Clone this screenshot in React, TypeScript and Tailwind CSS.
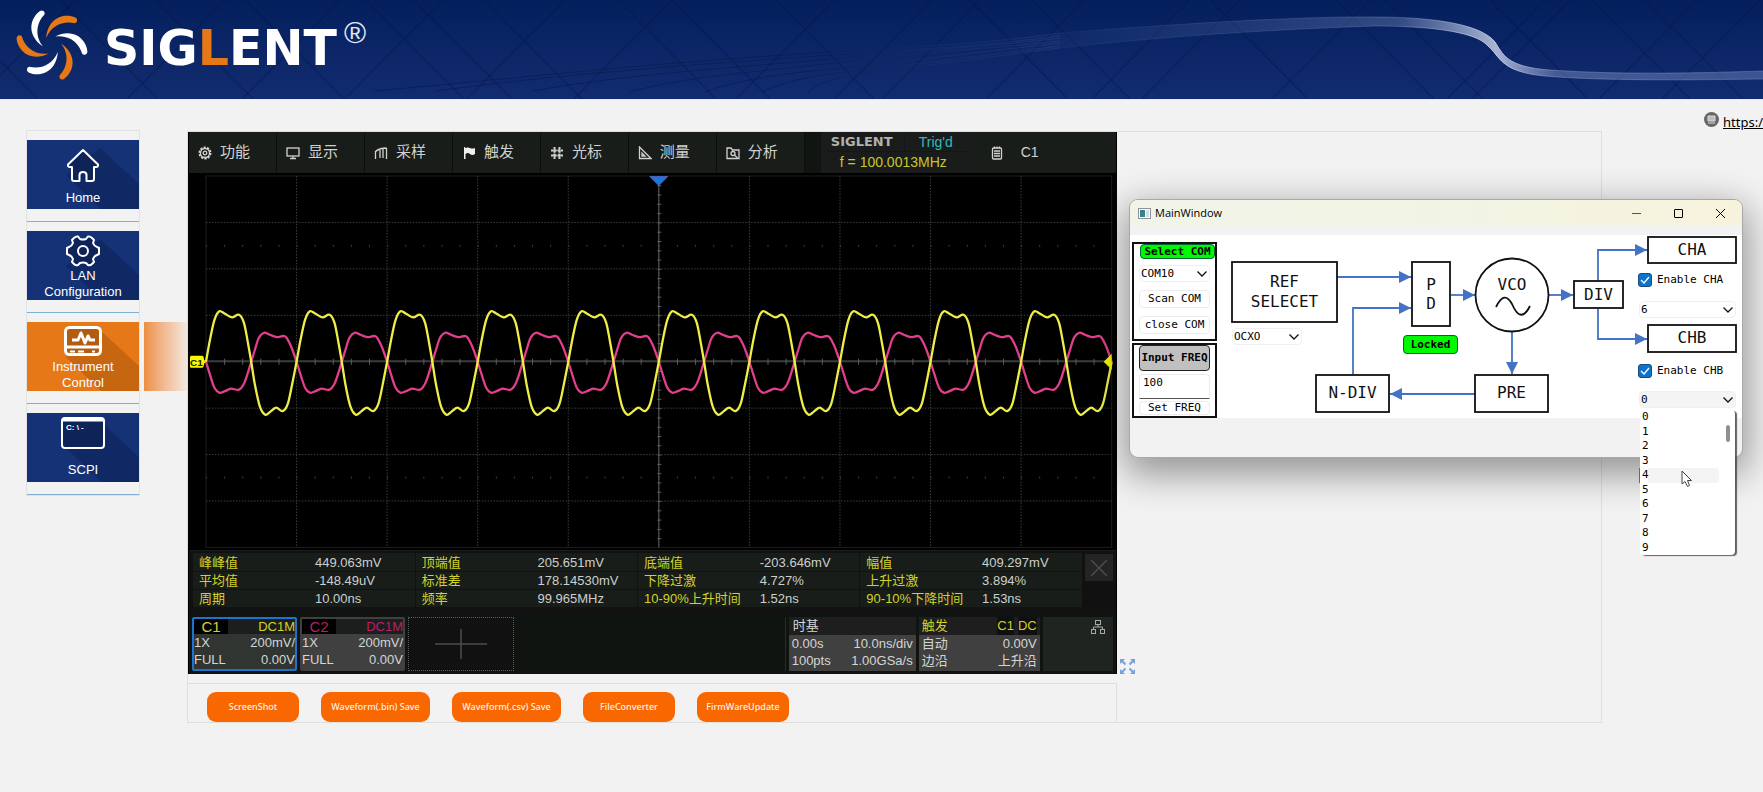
import { useState } from "react";
import type { ReactNode } from "react";

type Point = [number, number];

const SCOPE_FONT = "font-['Liberation_Sans','Noto_Sans_CJK_SC',sans-serif]";
const MONO_FONT = "font-['DejaVu_Sans_Mono','Liberation_Mono',monospace]";

// ---------- WAVEFORMS ----------
const DIV = 90.7;

const ch1Period: Point[] = [
  [0, 0], [4, -22], [8.5, -42], [13.3, -50.5], [19, -48], [26, -44.5], [33, -47], [38, -39], [42, -19],
  [45.3, 0], [49, 23], [54, 45], [59.3, 53], [64, 50.5], [70.3, 46], [76.7, 49.5], [82, 42], [87, 19],
];

const ch2Period: Point[] = [
  [0, 0], [4, 13], [8.5, 26], [13.3, 31], [19, 29.5], [25, 27], [33, 28], [38, 22], [42, 11],
  [45.3, 0], [49, -12], [53, -24], [58.3, -29], [64, -27], [71, -24.7], [79, -25.5], [84, -18], [88, -8],
];

function buildWave(period: Point[]) {
  const pts: Point[] = [];
  for (let i = 0; i < 10; i++) {
    period.forEach(([x, y]) => pts.push([17 + i * DIV + x, 189 + y]));
  }
  pts.push([17 + 10 * DIV, 189]);

  let d = `M${pts[0][0]} ${pts[0][1]}`;
  for (let i = 0; i < pts.length - 1; i++) {
    const p0 = pts[i - 1] || pts[i];
    const p1 = pts[i];
    const p2 = pts[i + 1];
    const p3 = pts[i + 2] || p2;
    const c1 = [p1[0] + (p2[0] - p0[0]) / 6, p1[1] + (p2[1] - p0[1]) / 6];
    const c2 = [p2[0] - (p3[0] - p1[0]) / 6, p2[1] - (p3[1] - p1[1]) / 6];
    d += `C${c1[0].toFixed(1)} ${c1[1].toFixed(1)} ${c2[0].toFixed(1)} ${c2[1].toFixed(1)} ${p2[0].toFixed(1)} ${p2[1].toFixed(1)}`;
  }
  return d;
}

const range = (n: number) => Array.from({ length: n }, (_, i) => i);

// ---------- HEADER ----------
function Header() {
  const petals = [0, 60, 120, 180, 240, 300];
  const streaks = [
    "M374 91C520 78 640 64 800 54S1000 42 1060 33",
    "M436 91C560 74 700 64 820 56S1000 44 1060 36",
    "M532 91C640 72 740 68 840 58S1000 46 1060 38",
    "M630 92C690 75 780 70 860 60S1000 48 1060 41",
    "M705 92C750 74 830 70 880 64S1000 50 1060 43",
    "M762 92C800 74 850 72 900 66S1010 52 1060 46",
    "M808 92C825 76 870 72 920 66S1010 54 1060 48",
  ];

  return (
    <header className="relative h-[100px] overflow-hidden border-b border-[#e8e8f8] bg-linear-to-b from-[#051f5d] to-[#122c70]">
      <svg className="absolute inset-0 h-full w-full" aria-hidden="true">
        <defs>
          <linearGradient id="ribbon" gradientUnits="userSpaceOnUse" x1="1000" x2="1763" y1="0" y2="0">
            <stop offset="0" stopColor="#8fa0d0" stopOpacity="0" />
            <stop offset="0.3" stopColor="#8fa0d0" stopOpacity="0.16" />
            <stop offset="0.52" stopColor="#9fb0dc" stopOpacity="0.28" />
            <stop offset="0.65" stopColor="#dfe6fa" stopOpacity="0.75" />
            <stop offset="0.73" stopColor="#a5b5e0" stopOpacity="0.35" />
            <stop offset="1" stopColor="#8fa3d8" stopOpacity="0.35" />
          </linearGradient>
          <linearGradient id="streak" gradientUnits="userSpaceOnUse" x1="370" x2="1060" y1="0" y2="0">
            <stop offset="0" stopColor="#061a4c" stopOpacity="0.7" />
            <stop offset="0.65" stopColor="#061a4c" stopOpacity="0.6" />
            <stop offset="1" stopColor="#3a4f8a" stopOpacity="0.3" />
          </linearGradient>
        </defs>
        <g stroke="#03184a" strokeOpacity="0.38" strokeWidth="1.5">
          {[-60, 60, 155, 246, 366, 414, 484, 618, 672, 776, 970, 1032, 1210, 1336, 1385, 1490, 1592, 1645].map((x) => (
            <path key={x} d={`M${x} 0l98 99`} />
          ))}
          {[75, 225, 340, 443, 565, 672, 834, 932, 980, 1084, 1190, 1240, 1370, 1545, 1570, 1697, 1760].map((x) => (
            <path key={x} d={`M${x} 0l-98 99`} />
          ))}
        </g>
        <g fill="none" stroke="url(#streak)">
          {streaks.map((d) => (
            <path key={d} d={d} />
          ))}
        </g>
        <path
          d="M1000 41L1060 33C1160 25 1300 16 1374 17C1428 17 1480 23 1495 42C1503 54 1506 67 1550 70C1620 75 1700 73 1763 71V79C1690 80 1600 81 1545 76C1500 72 1500 56 1488 46C1475 30 1420 26 1374 26C1260 30 1160 37 1060 48L1000 56Z"
          fill="url(#ribbon)"
        />
        <path
          d="M1060 33C1160 25 1300 16 1374 17C1428 17 1480 23 1495 42C1503 54 1506 67 1550 70C1620 75 1700 73 1763 71M1060 48C1160 37 1260 30 1374 26C1420 26 1475 30 1488 46C1500 56 1500 72 1545 76C1600 81 1690 80 1763 79"
          fill="none"
          stroke="url(#ribbon)"
        />
      </svg>

      <div className="relative flex h-full items-start pl-4">
        <svg viewBox="0 0 72 72" className="mt-[9px] h-[72px] w-[72px] overflow-visible" role="img" aria-label="Siglent">
          {petals.map((deg, i) => (
            <path
              key={deg}
              transform={`rotate(${deg} 36 36)`}
              d="M24 2C14 9 10 26 27 37.500C18 26 21 13 28.500 5.500A3 3 0 0 0 24 2Z"
              fill={i % 2 === 0 ? "#ffffff" : "#e67817"}
            />
          ))}
        </svg>
        <span className="mt-[20px] ml-4 font-['DejaVu_Sans',sans-serif] text-[49px] leading-[58px] font-bold text-white">
          SIG<span className="text-[#e67817]">L</span>ENT
        </span>
        <span className="mt-[16px] ml-[7px] font-['Liberation_Sans',sans-serif] text-[30px] leading-[34px] text-[#e4e8f6]">®</span>
      </div>
    </header>
  );
}

// ---------- SIDEBAR ----------
function HomeIcon() {
  return (
    <svg viewBox="0 0 34 34" className="h-[34px] w-[34px]" fill="none" stroke="white" strokeWidth="2" strokeLinejoin="round">
      <path d="M17 2L32 16.500Q32.500 19 30 19H28V31Q28 33 26 33H20.500V27Q20.500 24 17 24T13.500 27V33H8Q6 33 6 31V19H4Q1.500 19 2 16.500Z" fill="#0e2458" />
    </svg>
  );
}

function GearIcon() {
  return (
    <svg viewBox="0 0 34 32" className="h-[32px] w-[34px]" fill="none" stroke="white" strokeWidth="2" strokeLinejoin="round">
      <path
        d="M8 3Q10 1 12 1.500L14 4Q17 5 20 4L22 1.500Q24 1 26 3L28 5L27 8Q28 11 31 12L33 13V19L31 20Q28 21 27 24L28 27L26 29Q24 31 22 30L20 28Q17 27 14 28L12 30Q10 31 8 29L6 27L7 24Q6 21 3 20L1 19V13L3 12Q6 11 7 8L6 5Z"
        fill="#0e2458"
      />
      <circle cx="17" cy="16" r="5" />
    </svg>
  );
}

function ScopeIcon() {
  return (
    <svg viewBox="0 0 38 30" className="h-[30px] w-[38px]" fill="none" stroke="white" strokeWidth="2">
      <rect x="1.500" y="1.500" width="35" height="27" rx="4" strokeWidth="3" fill="#b35c10" />
      <path d="M2 21h34" strokeWidth="3" />
      <path d="M8 14h6l3-7l4 10l3-7l2 4h5" strokeWidth="3" strokeLinejoin="round" />
      <path d="M6 25.500h5M14 25.500h6" />
      <path d="M28 25.500h3" />
    </svg>
  );
}

function ConsoleIcon() {
  return (
    <svg viewBox="0 0 44 32" className="h-[32px] w-[44px]" fill="none" stroke="white" strokeWidth="2">
      <rect x="1" y="1" width="42" height="30" rx="3" fill="#0e2458" />
      <path d="M2 3h40" strokeWidth="3" />
      <text x="5" y="13" fill="white" stroke="none" className="font-['Liberation_Sans',sans-serif] text-[8px] font-bold">
        C: \ -
      </text>
    </svg>
  );
}

const navItems = [
  { lines: ["Home"], icon: <HomeIcon />, active: false, pad: "pt-2 pb-[3px]" },
  { lines: ["LAN", "Configuration"], icon: <GearIcon />, active: false, pad: "pt-1" },
  { lines: ["Instrument", "Control"], icon: <ScopeIcon />, active: true, pad: "pt-1" },
  { lines: ["SCPI"], icon: <ConsoleIcon />, active: false, pad: "pt-1 pb-1" },
];

function Sidebar() {
  return (
    <nav className="w-[114px] shrink-0 self-start border border-[#e2e2e2] font-['Liberation_Sans',sans-serif] text-[13px] leading-4 text-white">
      {navItems.map((item) => (
        <div key={item.lines[0]} className="relative border-b border-[#7fb0d0] pt-[9px] pb-3">
          <a
            href="#"
            className={`relative flex h-[69px] flex-col items-center justify-between overflow-hidden text-center ${item.pad} ${
              item.active ? "bg-[#e67817]" : "bg-[#153277]"
            }`}
          >
            <svg className="absolute inset-0 h-full w-full" aria-hidden="true">
              <path
                d="M39 35L73 8L112 44V69H74Z"
                fill={item.active ? "#a8540c" : "#0c2052"}
                fillOpacity="0.5"
              />
            </svg>
            <span className="relative">{item.icon}</span>
            <span className="relative">
              {item.lines.map((line) => (
                <span key={line} className="block">
                  {line}
                </span>
              ))}
            </span>
          </a>
          {item.active && (
            <div className="absolute top-[9px] left-[117px] h-[69px] w-[43px] bg-linear-to-r from-[#ec8f42] to-[#f2e8e0]" />
          )}
        </div>
      ))}
    </nav>
  );
}

// ---------- OSCILLOSCOPE ----------
const stroke = { fill: "none", stroke: "#d0d2d0", strokeWidth: 1.3 };

const menuItems: { label: string; icon: ReactNode }[] = [
  {
    label: "功能",
    icon: (
      <g {...stroke}>
        <circle cx="7" cy="7" r="5.500" strokeDasharray="2.200 1.200" strokeWidth="2" />
        <circle cx="7" cy="7" r="4.500" />
        <circle cx="7" cy="7" r="1.800" />
      </g>
    ),
  },
  {
    label: "显示",
    icon: (
      <g {...stroke}>
        <rect x="1" y="2" width="12" height="8" />
        <path d="M7 10v2M4 12.500h6" />
      </g>
    ),
  },
  {
    label: "采样",
    icon: (
      <g {...stroke}>
        <path d="M1 6Q5 2 12.500 2M1.500 6v7M6 4v8M9 3v9M12.500 2v11" />
      </g>
    ),
  },
  {
    label: "触发",
    icon: <path d="M2 1v12h1.500V8Q6 6 8 8T13 8V2Q10 3 8 2T3 2V1Z" fill="#f0f0f0" />,
  },
  {
    label: "光标",
    icon: <path {...stroke} d="M4.500 1v12M9.500 1v12M1 4.500h12M1 9.500h12" strokeDasharray="2.500 0.700" strokeWidth="2" />,
  },
  {
    label: "测量",
    icon: <path {...stroke} d="M1.500 1V12.500H13ZM4 7v3h3Z" />,
  },
  {
    label: "分析",
    icon: (
      <g {...stroke}>
        <path d="M1 12.500V2h4l1.500 2H13v8.500Z" />
        <circle cx="7" cy="7.500" r="2" />
        <path d="M8.500 9l3 3" />
      </g>
    ),
  },
];

function ScopeMenu() {
  return (
    <div className="flex h-[41px] bg-[#101512] text-[14px] text-[#d0d2d0]">
      {menuItems.map((item) => (
        <button key={item.label} className="flex flex-[87] items-center gap-2 border-r border-[#0b0f0d] bg-[#181d1a] text-[15px]">
          <svg viewBox="0 0 14 14" className="ml-[9px] h-[14px] w-[14px] shrink-0">
            {item.icon}
          </svg>
          <span className="whitespace-nowrap">{item.label}</span>
        </button>
      ))}
      <div className="ml-4 flex flex-[150] flex-col bg-[#1a1b1b]">
        <div className="flex h-[20px] items-center border-b border-[#141717]">
          <span className="w-[84px] border-r border-[#141717] pl-[10px] font-['DejaVu_Sans',sans-serif] text-[13px] leading-[18px] font-bold text-[#b0b2b0]">
            SIGLENT
          </span>
          <span className="flex-1 pl-[14px] leading-[18px] text-[#30bcbc]">Trig'd</span>
        </div>
        <span className="pl-[19px] leading-[20px] whitespace-pre text-[#c8c828]">f = 100.0013MHz</span>
      </div>
      <div className="flex flex-[145] items-center gap-[18px] bg-[#181d1a]">
        <svg viewBox="0 0 12 14" className="ml-[20px] h-[14px] w-[12px]" {...stroke}>
          <rect x="1.500" y="2" width="9" height="11" rx="1" />
          <path d="M3 5h6M3 7.500h6M3 10h6M3.500 0.500v2M6 0.500v2M8.500 0.500v2" />
        </svg>
        <span>C1</span>
      </div>
    </div>
  );
}

function ScopePlot() {
  return (
    <svg viewBox="0 0 928 378" className="block w-full bg-black" role="img" aria-label="C1 C2">
      <rect x="17" y="3" width="907" height="372" fill="none" stroke="#1c1e1c" />
      <g stroke="#3c3e3c" strokeDasharray="1.500 1.500">
        {range(9).map((i) => (
          <path key={i} d={`M${17 + (i + 1) * DIV} 3V375`} />
        ))}
        {[1, 2, 3, 5, 6, 7].map((i) => (
          <path key={i} d={`M17 ${3 + i * 46.5}H924`} />
        ))}
      </g>
      <g fill="#3a3c3a">
        {range(50).map((i) => (
          <g key={i}>
            <rect x={17 + i * 18.14} y="72" width="1" height="2" />
            <rect x={17 + i * 18.14} y="304" width="1" height="2" />
          </g>
        ))}
      </g>
      <g stroke="#5c5e5c">
        <path d="M17 188.500H924" stroke="#3c3d3c" strokeWidth="2" />
        <path d="M470.500 3V375" />
        {range(50).map((i) => (
          <path key={`x${i}`} d={`M${17.5 + i * 18.14} 186v6`} />
        ))}
        {range(40).map((i) => (
          <path key={`y${i}`} d={`M469 ${3.5 + i * 9.3}h4`} />
        ))}
      </g>
      <path d={buildWave(ch2Period)} fill="none" stroke="#e23e8c" strokeWidth="2.300" />
      <path d={buildWave(ch1Period)} fill="none" stroke="#eeee48" strokeWidth="2.300" />
      <path d="M461.500 3.500H479.500L470.500 12.500Z" fill="#1878e0" stroke="#5060b0" />
      <path d="M924 181V197L916 189Z" fill="#f4f400" />
      <path d="M2 183H13Q15 183 15 187L17 189L15 191Q15 195 13 195H2Q1 195 1 194V184Z" fill="#f8f800" />
      <text x="1" y="193" fill="#202000" className="font-['Liberation_Sans',sans-serif] text-[10px] font-bold">
        C1
      </text>
    </svg>
  );
}

const measurements = [
  [["峰峰值", "449.063mV"], ["顶端值", "205.651mV"], ["底端值", "-203.646mV"], ["幅值", "409.297mV"]],
  [["平均值", "-148.49uV"], ["标准差", "178.14530mV"], ["下降过激", "4.727%"], ["上升过激", "3.894%"]],
  [["周期", "10.00ns"], ["频率", "99.965MHz"], ["10-90%上升时间", "1.52ns"], ["90-10%下降时间", "1.53ns"]],
];

function Measurements() {
  return (
    <div className="flex items-start gap-[2px] border-t border-[#1c1c1c] bg-[#101110] pt-[2px] pr-[3px] pb-[6px] pl-1 text-[13px]">
      <table className="w-full flex-1 table-fixed border-collapse">
        <tbody>
          {measurements.map((row, i) => (
            <tr key={i} className="h-[18px] border-b border-[#0f1311] bg-[#181d1a]">
              {row.map(([label, value]) => (
                <td key={label} className="border-r border-[#0f1311] p-0">
                  <div className="flex leading-[17px] whitespace-nowrap">
                    <span className="w-[55%] pl-[6px] text-[#d2d22a]">{label}</span>
                    <span className="text-[#ccd0cc]">{value}</span>
                  </div>
                </td>
              ))}
            </tr>
          ))}
        </tbody>
      </table>
      <button aria-label="close" className="mt-px flex h-[27px] w-[28px] items-center justify-center bg-[#242424]">
        <svg viewBox="0 0 18 18" className="h-[18px] w-[18px]" stroke="#4c4c4c" strokeWidth="1.500">
          <path d="M1 1L17 17M17 1L1 17" />
        </svg>
      </button>
    </div>
  );
}

type ChannelProps = {
  name: string;
  color: string;
  box: string;
};

function Channel({ name, color, box }: ChannelProps) {
  return (
    <div className={`flex w-[105px] flex-col rounded-xs border-2 leading-[17px] text-[#d4d6d4] ${box}`}>
      <div className={`flex h-[15px] justify-between leading-[16px] ${color}`}>
        <span className="w-[34px] bg-black text-center text-[15px]">{name}</span>
        <span className="flex-1 bg-[#1c1e1d] text-right">DC1M</span>
      </div>
      <div className="flex justify-between">
        <span>1X</span>
        <span>200mV/</span>
      </div>
      <div className="flex justify-between">
        <span>FULL</span>
        <span>0.00V</span>
      </div>
    </div>
  );
}

function ScopeStatus() {
  return (
    <div className="flex h-[60px] gap-[3px] bg-[#0f1411] px-[3px] py-[3px] text-[13px] leading-[17px] text-[#d4d6d4]">
      <Channel name="C1" color="text-[#d2d22a]" box="border-[#1c74cc] bg-[#303532]" />
      <Channel name="C2" color="text-[#b81e6c]" box="border-[#404040] bg-[#404040]" />
      <button aria-label="add" className="flex h-[54px] w-[106px] items-center justify-center border border-dotted border-[#5a5a5a] bg-[#111111]">
        <svg viewBox="0 0 52 30" className="h-[30px] w-[52px]" stroke="#4c4c4c" strokeWidth="1.500">
          <path d="M0 15H52M26 0V30" />
        </svg>
      </button>
      <div className="flex-1 border-r border-[#2a2c2a]" />
      <div className="flex w-[127px] flex-col bg-[#404040]">
        <div className="h-[18px] bg-[#1d1e1d] px-1">时基</div>
        <div className="flex justify-between px-[3px]">
          <span>0.00s</span>
          <span>10.0ns/div</span>
        </div>
        <div className="flex justify-between px-[3px]">
          <span>100pts</span>
          <span>1.00GSa/s</span>
        </div>
      </div>
      <div className="flex w-[121px] flex-col bg-[#404040]">
        <div className="flex h-[18px] justify-between bg-[#1d1e1d] px-[3px] text-[#d2d22a]">
          <span>触发</span>
          <span className="flex gap-1">
            <span className="bg-[#101010]">C1</span>
            <span className="bg-[#101010]">DC</span>
          </span>
        </div>
        <div className="flex justify-between px-[3px]">
          <span>自动</span>
          <span>0.00V</span>
        </div>
        <div className="flex justify-between px-[3px]">
          <span>边沿</span>
          <span>上升沿</span>
        </div>
      </div>
      <div className="flex w-[70px] justify-end bg-[#1f2421] pt-[3px] pr-[8px]">
        <svg viewBox="0 0 14 14" className="h-[14px] w-[14px]" fill="none" stroke="#a8aaa8">
          <rect x="4.500" y="0.500" width="5" height="4" />
          <rect x="0.500" y="9.500" width="4" height="4" />
          <rect x="9.500" y="9.500" width="4" height="4" />
          <path d="M7 5v2M2.500 9V7h9v2" />
        </svg>
      </div>
    </div>
  );
}

const actions = [
  { label: "ScreenShot", width: "w-[92px]" },
  { label: "Waveform(.bin) Save", width: "w-[109px]" },
  { label: "Waveform(.csv) Save", width: "w-[109px]" },
  { label: "FileConverter", width: "w-[92px]" },
  { label: "FirmWareUpdate", width: "w-[92px]" },
];

function InstrumentPanel() {
  return (
    <main className="mt-px mr-[161px] ml-[47px] grid flex-1 grid-cols-[930fr_485fr] self-start border border-[#dedede]">
      <div>
        <div className={`border-x border-black bg-black ${SCOPE_FONT}`}>
          <ScopeMenu />
          <ScopePlot />
          <Measurements />
          <ScopeStatus />
        </div>
        <div className="mt-[9px] flex gap-[22px] border-t border-r border-[#dedede] pt-2 pl-[19px]">
          {actions.map((action) => (
            <button
              key={action.label}
              className={`h-[30px] rounded-[9px] bg-[#f96800] font-['Noto_Sans',sans-serif] text-[9px] font-medium whitespace-nowrap text-[#fff0e0] ${action.width}`}
            >
              {action.label}
            </button>
          ))}
        </div>
      </div>
      <button aria-label="fullscreen" className="mb-[48px] ml-[3px] self-end justify-self-start">
        <svg viewBox="0 0 15 15" className="h-[15px] w-[15px]" fill="#7ba0d8" stroke="#7ba0d8" strokeWidth="2">
          <path d="M1 1L5.500 5.500M14 1L9.500 5.500M1 14L5.500 9.500M14 14L9.500 9.500" />
          <path d="M0 0H5L0 5ZM15 0V5L10 0ZM0 15V10L5 15ZM15 15H10L15 10Z" stroke="none" />
        </svg>
      </button>
    </main>
  );
}

// ---------- MAIN WINDOW ----------
type ComboProps = {
  label: string;
  options: string[];
  className: string;
};

function Combo({ label, options, className }: ComboProps) {
  return (
    <div className={`flex h-[17px] items-center rounded-sm border border-[#f0f0f0] ${className}`}>
      <select aria-label={label} className="h-full w-full appearance-none bg-transparent pl-[1px] outline-none">
        {options.map((o) => (
          <option key={o}>{o}</option>
        ))}
      </select>
      <svg viewBox="0 0 10 6" className="pointer-events-none mr-px -ml-3 h-[6px] w-[10px] shrink-0" fill="none" stroke="#111" strokeWidth="1.300">
        <path d="M0.500 0.500L5 5L9.500 0.500" />
      </svg>
    </div>
  );
}

type Block = { x: number; y: number; w: number; h: number; lines: [string, number][] };

const blocks: Block[] = [
  { x: 102, y: 62, w: 105, h: 60, lines: [["REF", 87], ["SELECET", 107]] },
  { x: 282, y: 62, w: 38, h: 64, lines: [["P", 90], ["D", 109]] },
  { x: 444, y: 81, w: 49, h: 27, lines: [["DIV", 100]] },
  { x: 518, y: 37, w: 88, h: 26, lines: [["CHA", 55]] },
  { x: 518, y: 125, w: 88, h: 27, lines: [["CHB", 143]] },
  { x: 186, y: 175, w: 73, h: 37, lines: [["N-DIV", 198]] },
  { x: 345, y: 175, w: 73, h: 37, lines: [["PRE", 198]] },
];

function Diagram() {
  return (
    <svg viewBox="0 35 612 183" className="block w-full bg-white">
      <defs>
        <marker id="arrow" viewBox="0 0 12 12" refX="12" refY="6" markerWidth="12" markerHeight="12" markerUnits="userSpaceOnUse" orient="auto">
          <path d="M0 0L12 6L0 12Z" fill="#4472c4" />
        </marker>
      </defs>
      <g fill="none" stroke="#4472c4" strokeWidth="1.800">
        <path d="M207 77H281" markerEnd="url(#arrow)" />
        <path d="M223 174V108H281" markerEnd="url(#arrow)" />
        <path d="M321 95H345" markerEnd="url(#arrow)" />
        <path d="M419 95H443" markerEnd="url(#arrow)" />
        <path d="M468 81V50H517" markerEnd="url(#arrow)" />
        <path d="M468 109V139H517" markerEnd="url(#arrow)" />
        <path d="M382 132V174" markerEnd="url(#arrow)" />
        <path d="M345 194H260" markerEnd="url(#arrow)" />
      </g>
      <g fill="white" stroke="#111" strokeWidth="1.800">
        {blocks.map((b) => (
          <rect key={`${b.x}-${b.y}`} x={b.x} y={b.y} width={b.w} height={b.h} />
        ))}
        <circle cx="382" cy="95" r="36.500" />
        <path d="M366 107C372 95 377 95 382 104C388 118 394 118 400 106" fill="none" />
      </g>
      <g fill="#111" textAnchor="middle" className="text-[16px]">
        {blocks.map((b) =>
          b.lines.map(([text, y]) => (
            <text key={text} x={b.x + b.w / 2} y={y}>
              {text}
            </text>
          ))
        )}
        <text x="382" y="90">
          VCO
        </text>
      </g>
    </svg>
  );
}

function EnableBox({ label, className }: { label: string; className: string }) {
  const [on, setOn] = useState(true);
  return (
    <label className={`absolute left-[508px] flex items-center gap-[5px] whitespace-nowrap ${className}`}>
      <span className="grid h-[14px] w-[14px] place-items-center">
        <input
          type="checkbox"
          checked={on}
          onChange={() => setOn(!on)}
          className="col-start-1 row-start-1 h-[14px] w-[14px] appearance-none rounded-[3px] border border-[#1a4a78] checked:bg-[#0a74cc]"
        />
        <svg viewBox="0 0 10 8" className="pointer-events-none col-start-1 row-start-1 h-[8px] w-[10px]" fill="none" stroke="white" strokeWidth="1.300">
          <path d="M1 4L4 7L9 1" />
        </svg>
      </span>
      {label}
    </label>
  );
}

function MainWindow() {
  const [freq, setFreq] = useState("100");
  const flatButton = "w-[71px] rounded-sm border border-[#ececec] bg-white text-center whitespace-nowrap";

  return (
    <section
      className={`absolute top-[200px] left-[1130px] w-[612px] rounded-lg bg-[#f2f2f2] text-[11px] leading-[14px] text-black shadow-[0_12px_36px_6px_rgba(0,0,0,0.38)] ring-1 ring-[#a8a8a8] ${MONO_FONT}`}
    >
      <div className="flex h-[26px] items-center rounded-t-lg bg-linear-to-r from-[#f2f4e8] via-[#f1f4e4] to-[#f7f2dc] pl-2 font-['Open_Sans',sans-serif] text-[11px]">
        <svg viewBox="0 0 13 11" className="h-[11px] w-[13px]">
          <rect x="0.500" y="0.500" width="12" height="10" fill="white" stroke="#8a929a" />
          <rect x="2" y="2" width="5" height="7" fill="#3c7f88" />
          <rect x="8" y="2" width="3" height="7" fill="#d4dce4" />
        </svg>
        <span className="ml-1 flex-1">MainWindow</span>
        <div className="flex items-center gap-[33px] pr-[17px]">
          <button aria-label="Minimize" className="h-px w-[9px] bg-[#555]" />
          <button aria-label="Maximize" className="h-[9px] w-[9px] rounded-[1px] border border-black" />
          <button aria-label="Close">
            <svg viewBox="0 0 9 9" className="h-[9px] w-[9px]" stroke="black">
              <path d="M0 0L9 9M9 0L0 9" />
            </svg>
          </button>
        </div>
      </div>

      <div className="mt-[9px]">
        <Diagram />
      </div>
      <div className="h-[39px]" />

      {/* serial port */}
      <div className="absolute top-[42px] left-[2px] flex h-[99px] w-[85px] flex-col items-center border-2 border-[#111] bg-white">
        <div className="h-[15px] w-[75px] self-end rounded-sm border border-[#063] bg-[#00f800] text-center font-bold whitespace-nowrap">
          Select COM
        </div>
        <Combo label="COM port" options={["COM10"]} className="mt-[6px] w-[71px]" />
        <button className={`mt-2 h-[18px] ${flatButton}`}>Scan COM</button>
        <button className={`mt-[8px] h-[18px] ${flatButton}`}>close COM</button>
      </div>

      {/* frequency */}
      <div className="absolute top-[143px] left-[2px] flex h-[75px] w-[85px] flex-col items-center border-2 border-[#111] bg-white">
        <label
          htmlFor="freq"
          className="flex h-[26px] w-[71px] shrink-0 items-center justify-center rounded-sm border border-[#222] bg-[#c0c0c0] font-bold whitespace-nowrap"
        >
          Input FREQ
        </label>
        <input
          id="freq"
          value={freq}
          onChange={(e) => setFreq(e.target.value)}
          className="mt-[3px] h-[25px] w-[71px] rounded-t-sm border border-[#ececec] border-b-[#555] pb-2 pl-[3px] outline-none"
        />
        <button className={`mt-[2px] h-[14px] leading-[12px] ${flatButton}`}>Set FREQ</button>
      </div>

      <Combo label="Reference" options={["OCXO"]} className="absolute top-[128px] left-[102px] w-[70px]" />
      <div className="absolute top-[135px] left-[273px] h-[19px] w-[55px] rounded-sm border border-[#063] bg-[#00f800] text-center text-[11px] leading-[17px] font-bold">
        Locked
      </div>

      <EnableBox label="Enable CHA" className="top-[73px]" />
      <Combo label="CHA divider" options={["6"]} className="absolute top-[101px] left-[509px] w-[97px]" />
      <EnableBox label="Enable CHB" className="top-[164px]" />
      <Combo label="CHB divider" options={["0"]} className="absolute top-[191px] left-[509px] w-[97px] bg-[#f4f4f4]" />

      <ul
        role="listbox"
        aria-label="CHB divider values"
        className="absolute top-[210px] left-[510px] flex h-[145px] w-[95px] flex-col rounded-sm bg-white shadow-[2px_1px_1px_rgba(60,60,60,0.8)]"
      >
        {range(10).map((n) => (
          <li
            key={n}
            role="option"
            aria-selected={n === 4}
            className={`flex flex-1 items-center pl-[2px] ${
              n === 4 ? "mr-4 rounded-r-sm bg-linear-to-r from-white from-10% to-[#f4f4f4] to-10% shadow-[-1px_0_0_#2a7ab8]" : ""
            }`}
          >
            {n}
          </li>
        ))}
        <li aria-hidden="true" className="absolute top-[15px] right-[5px] h-[17px] w-1 rounded-full bg-[#909090]" />
      </ul>

      <svg viewBox="0 0 12 18" className="absolute top-[270px] left-[551px] h-[18px] w-[12px]" fill="white" stroke="#444">
        <path d="M1 1V14L4 11.500L6.500 16.500L8.500 15.500L6.500 10.500H10.500Z" />
      </svg>
    </section>
  );
}

export default function App() {
  return (
    <div className="relative min-h-screen overflow-hidden bg-[#f2f2f2]">
      <Header />

      <div className="flex h-[30px] justify-end pt-3 font-['Noto_Sans',sans-serif] text-[13px] text-black">
        <svg viewBox="0 0 15 15" className="mr-1 h-[15px] w-[15px]">
          <circle cx="7.500" cy="7.500" r="7.500" fill="#666" />
          <path d="M4 4h7v5H4ZM4 11h7" fill="#bbb" stroke="#ddd" />
        </svg>
        <a href="#" className="leading-5 whitespace-nowrap underline">
          https:/
        </a>
      </div>

      <div className="flex pl-[26px]">
        <Sidebar />
        <InstrumentPanel />
      </div>

      <MainWindow />
    </div>
  );
}
